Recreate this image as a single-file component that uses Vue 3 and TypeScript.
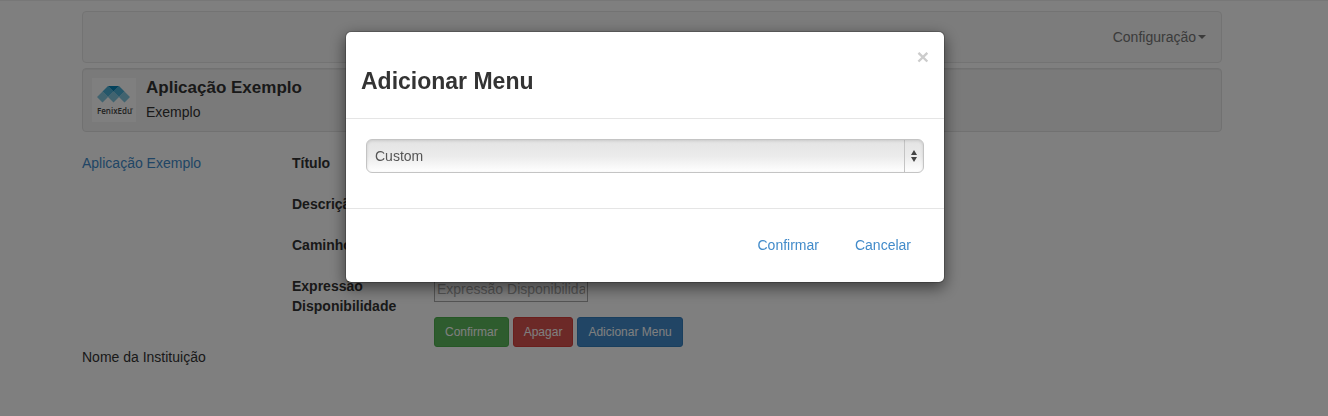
<script setup lang="ts">
import { ref } from 'vue'

interface Field {
  id: string
  label: string
  placeholder?: string
}

const fields: Field[] = [
  { id: 'title', label: 'Título' },
  { id: 'description', label: 'Descrição' },
  { id: 'path', label: 'Caminho' },
  { id: 'expression', label: 'Expressão Disponibilidade', placeholder: 'Expressão Disponibilidade' },
]

const values = ref<Record<string, string>>({ title: '', description: '', path: '', expression: '' })
const menuType = ref('Custom')
const open = ref(true)
</script>

<template>
  <div class="page">
    <div class="container">
      <nav class="navbar">
        <button type="button" class="nav-toggle">Configuração<span class="caret"></span></button>
      </nav>

      <header class="well">
        <svg class="logo" viewBox="0 0 44 44" role="img" aria-label="FenixEdu">
          <rect width="44" height="44" fill="#fff" />
          <path d="M10.500 13.500L16 19L10.500 24.500L5 19ZM32.500 13.500L38 19L32.500 24.500L27 19Z" fill="#82c6df" />
          <path d="M21.500 13.500L27 19L21.500 24.500L16 19Z" fill="#82c6df" />
          <path d="M16 8L21.500 13.500L16 19L10.500 13.500Z" fill="#4aafd5" />
          <path d="M27 8L32.500 13.500L27 19L21.500 13.500Z" fill="#4aafd5" />
          <path d="M16 8H27L21.500 13.500Z" fill="#0784b8" />
          <text x="5" y="36" class="logo-name">FenixEdu</text>
          <text x="38" y="33" class="logo-mark">™</text>
        </svg>
        <div>
          <h1 class="app-title">Aplicação Exemplo</h1>
          <p class="app-subtitle">Exemplo</p>
        </div>
      </header>

      <main class="columns">
        <aside><a href="#" class="link">Aplicação Exemplo</a></aside>
        <form @submit.prevent>
          <div v-for="field in fields" :key="field.id" class="field">
            <label :for="field.id">{{ field.label }}</label>
            <input :id="field.id" v-model="values[field.id]" type="text" :placeholder="field.placeholder" />
          </div>
          <div class="actions">
            <button type="submit" class="btn success">Confirmar</button>
            <button type="button" class="btn danger">Apagar</button>
            <button type="button" class="btn primary" @click="open = true">Adicionar Menu</button>
          </div>
        </form>
      </main>

      <footer class="footer">Nome da Instituição</footer>
    </div>

    <div v-if="open" class="backdrop">
      <section class="modal" role="dialog" aria-labelledby="dialog-title">
        <div class="modal-header">
          <h2 id="dialog-title">Adicionar Menu</h2>
          <button type="button" class="close" @click="open = false">×</button>
        </div>
        <div class="modal-body">
          <div class="select-box">
            <select v-model="menuType" aria-labelledby="dialog-title">
              <option>Custom</option>
            </select>
            <svg class="arrows" viewBox="0 0 6 12" aria-hidden="true">
              <path d="M0 5L3 0L6 5ZM0 7H6L3 12Z" fill="#444" />
            </svg>
          </div>
        </div>
        <div class="modal-footer">
          <button type="button" class="text-btn" @click="open = false">Confirmar</button>
          <button type="button" class="text-btn" @click="open = false">Cancelar</button>
        </div>
      </section>
    </div>
  </div>
</template>

<style>
body {
  margin: 0;
  background: #fff;
}
</style>

<style scoped>
* {
  box-sizing: border-box;
}

.page {
  min-height: 100vh;
  padding: 10px 36px 20px 12px;
  border-top: 1px solid #eee;
  color: #333;
  font: 14px/20px "Liberation Sans", Arial, sans-serif;
}

button,
input,
select {
  font: inherit;
  color: inherit;
}

button {
  cursor: pointer;
}

.container {
  max-width: 1140px;
  margin: 0 auto;
}

.navbar {
  display: flex;
  justify-content: flex-end;
  align-items: center;
  min-height: 52px;
  padding: 0 15px;
  margin-bottom: 5px;
  border: 1px solid #e7e7e7;
  border-radius: 4px;
  background: #f8f8f8;
}

.nav-toggle {
  display: flex;
  align-items: center;
  gap: 2px;
  padding: 0;
  border: 0;
  background: none;
  color: #777;
}

.caret {
  border: 4px solid transparent;
  border-top-color: #777;
  border-bottom: 0;
}

.well {
  display: flex;
  gap: 10px;
  padding: 9px;
  margin-bottom: 21px;
  border: 1px solid #e3e3e3;
  border-radius: 4px;
  background: #f5f5f5;
  box-shadow: inset 0 1px 1px rgba(0, 0, 0, 0.05);
}

.logo {
  width: 44px;
  height: 44px;
}

.logo-name {
  font: 600 8px "Open Sans", sans-serif;
  fill: #444;
}

.logo-mark {
  font: 4px "Open Sans", sans-serif;
  fill: #444;
}

.app-title {
  margin: 0 0 4px;
  font-size: 17px;
  line-height: 20px;
  font-weight: bold;
}

.app-subtitle {
  margin: 0;
}

.columns {
  display: grid;
  grid-template-columns: 180px 1fr;
  gap: 30px;
}

.link {
  color: #428bca;
  text-decoration: none;
}

.field {
  display: grid;
  grid-template-columns: 112px 154px;
  gap: 30px;
  align-items: start;
  height: 26px;
  margin-bottom: 15px;
}

.field label {
  font-weight: bold;
}

.field input {
  min-width: 0;
  height: 26px;
  padding: 1px 2px;
  border: 1px solid #aaa;
  background: #fff;
}

.field input::placeholder {
  color: #a9a9a9;
}

.actions {
  display: flex;
  gap: 4px;
  padding-left: 142px;
}

.btn {
  padding: 5px 10px;
  border: 1px solid;
  border-radius: 3px;
  color: #fff;
  font-size: 12px;
  line-height: 18px;
}

.success {
  background: #5cb85c;
  border-color: #4cae4c;
}

.danger {
  background: #d9534f;
  border-color: #d43f3a;
}

.primary {
  background: #428bca;
  border-color: #357ebd;
}

.backdrop {
  position: fixed;
  inset: 0;
  display: flex;
  justify-content: center;
  align-items: flex-start;
  padding: 31px 38px 20px 0;
  background: rgba(0, 0, 0, 0.5);
}

.modal {
  width: 100%;
  max-width: 600px;
  border: 1px solid rgba(0, 0, 0, 0.2);
  border-radius: 6px;
  background: #fff;
  background-clip: padding-box;
  box-shadow: 0 5px 15px rgba(0, 0, 0, 0.5);
}

.modal-header {
  display: flex;
  justify-content: space-between;
  align-items: flex-start;
  padding: 15px;
  border-bottom: 1px solid #e5e5e5;
}

.modal-header h2 {
  margin: 21px 0 9px;
  font-size: 23px;
  line-height: 26px;
  font-weight: bold;
}

.close {
  padding: 0;
  border: 0;
  background: none;
  color: #ccc;
  font-size: 21px;
  line-height: 20px;
  font-weight: bold;
}

.modal-body {
  padding: 20px 20px 35px;
}

.select-box {
  position: relative;
}

.select-box select {
  display: block;
  width: 100%;
  height: 34px;
  padding: 6px 24px 6px 8px;
  appearance: none;
  border: 1px solid #c4c4c4;
  border-radius: 6px;
  background:
    linear-gradient(#c4c4c4, #c4c4c4) right 18px top / 1px 100% no-repeat,
    linear-gradient(#e4e4e4, #ebebeb 50%, #fff);
  box-shadow: inset 0 1px 3px rgba(0, 0, 0, 0.12);
  color: #555;
}

.arrows {
  position: absolute;
  top: 11px;
  right: 7px;
  width: 6px;
  height: 12px;
  pointer-events: none;
}

.modal-footer {
  display: flex;
  justify-content: flex-end;
  gap: 10px;
  padding: 19px 20px 20px;
  border-top: 1px solid #e5e5e5;
}

.text-btn {
  padding: 6px 12px;
  border: 1px solid transparent;
  background: none;
  color: #428bca;
}
</style>
